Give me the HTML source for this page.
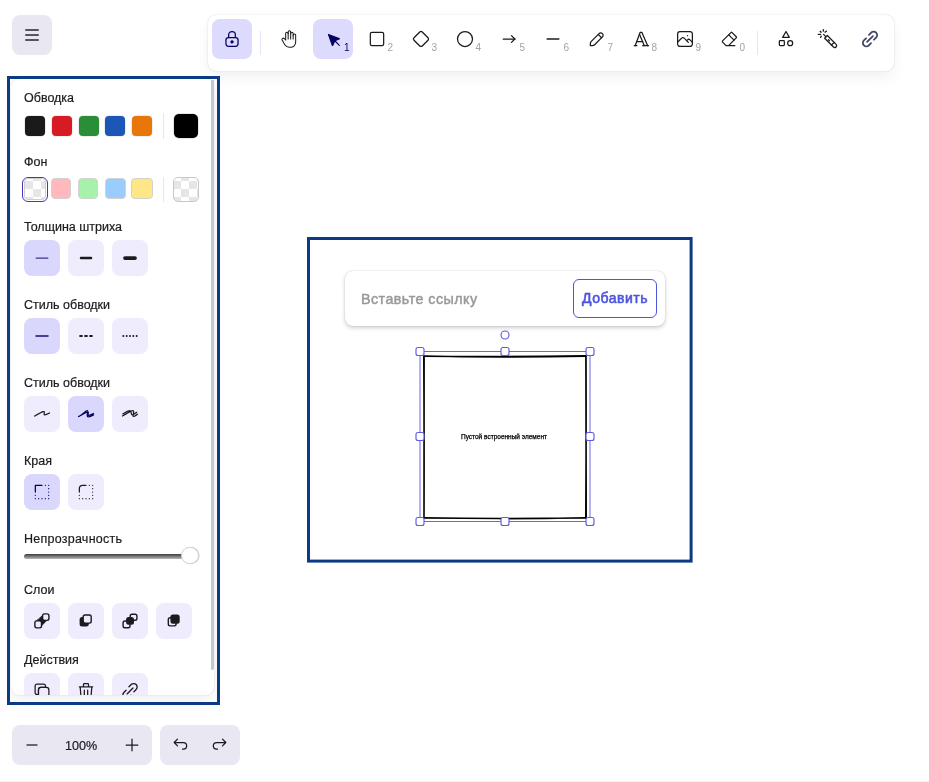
<!DOCTYPE html>
<html><head><meta charset="utf-8">
<style>
*{box-sizing:border-box;margin:0;padding:0}
html,body{width:929px;height:782px;overflow:hidden;background:#fff;font-family:"Liberation Sans",sans-serif;color:#1b1b1f}
.a{position:absolute}
.isl{position:absolute;background:#fff;border-radius:8px;box-shadow:0 0 0.93px 0 rgba(0,0,0,.17),0 0 3.13px 0 rgba(0,0,0,.08),0 7px 14px 0 rgba(0,0,0,.05)}
.tb{position:absolute;width:40px;height:40px;border-radius:8px;top:19px}
.tb svg{position:absolute;left:10px;top:10px;width:20px;height:20px;fill:none;stroke:#1b1b1f;stroke-linecap:round;stroke-linejoin:round}
.sel{background:#dddbfd}
.sel svg{stroke:#030064}
.kb{position:absolute;font-size:10px;color:#a3a3a3;line-height:9px}
.lbl{position:absolute;left:24px;font-size:12.5px;line-height:15px;color:#1b1b1f;white-space:nowrap;-webkit-text-stroke:0.2px #1b1b1f}
.sw{position:absolute;width:20px;height:20px;border-radius:4px}
.pb{position:absolute;width:36px;height:36px;border-radius:8px;background:#eeecfd}
.pb.on{background:#d9d7fb}
.pb svg{position:absolute;left:8px;top:8px;width:20px;height:20px;fill:none;stroke:#1b1b1f;stroke-linecap:round;stroke-linejoin:round}
.pb.on svg{stroke:#030064}
.chk{background:conic-gradient(#e6e6e6 25%,#fff 0 50%,#e6e6e6 0 75%,#fff 0);background-size:16px 16px}
.hd{position:absolute;width:9px;height:9px;border:1px solid #5f5ce0;border-radius:2.5px;background:#fff}
</style></head><body>
<div id="root" style="position:absolute;left:0;top:0;width:929px;height:782px;will-change:transform">

<!-- menu button -->
<div class="a" style="left:12px;top:15px;width:40px;height:40px;border-radius:8px;background:#e9e8f2">
  <div class="a" style="left:13px;top:14px;width:14px;height:2px;background:#55555c;border-radius:1px"></div>
  <div class="a" style="left:13px;top:19px;width:14px;height:2px;background:#55555c;border-radius:1px"></div>
  <div class="a" style="left:13px;top:24px;width:14px;height:2px;background:#55555c;border-radius:1px"></div>
</div>

<!-- toolbar -->
<div class="isl" style="left:208px;top:15px;width:686px;height:56px"></div>
<div class="tb sel" style="left:212px"><svg viewBox="0 0 20 20" stroke-width="1.25"><path d="M13.542 8.542H6.458a2.5 2.5 0 0 0-2.5 2.5v3.75a2.5 2.5 0 0 0 2.5 2.5h7.084a2.5 2.5 0 0 0 2.5-2.5v-3.75a2.5 2.5 0 0 0-2.5-2.5Z"/><path d="M10 13.958a1.042 1.042 0 1 0 0-2.083 1.042 1.042 0 0 0 0 2.083Z" fill="#030064"/><path d="M6.667 8.333V5.417C6.667 3.806 8.159 2.5 10 2.5c1.841 0 3.333 1.306 3.333 2.917v2.916"/></svg></div>
<div class="a" style="left:260px;top:31px;width:1px;height:24px;background:#e6e5f7"></div>
<div class="tb" style="left:269px"><svg viewBox="0 0 24 24" stroke-width="1.25"><path d="M8 13v-7.5a1.5 1.5 0 0 1 3 0v6.5"/><path d="M11 5.5v-2a1.5 1.5 0 1 1 3 0v8.5"/><path d="M14 5.5a1.5 1.5 0 0 1 3 0v6.5"/><path d="M17 7.5a1.5 1.5 0 0 1 3 0v8.5a6 6 0 0 1 -6 6h-2h.208a6 6 0 0 1 -5.012 -2.7a69.74 69.74 0 0 1 -.196 -.3c-.312 -.479 -1.407 -2.388 -3.286 -5.728a1.5 1.5 0 0 1 .536 -2.022a1.867 1.867 0 0 1 2.28 .28l1.47 1.47"/></svg></div>
<div class="tb sel" style="left:313px"><svg viewBox="0 0 22 22" stroke-width="1.25"><path d="M6 6l4.153 11.793a0.365 .365 0 0 0 .331 .207a0.366 .366 0 0 0 .332 -.207l2.184 -4.793l4.787 -1.994a0.355 .355 0 0 0 .213 -.323a0.355 .355 0 0 0 -.213 -.323l-11.787 -4.36z" fill="#030064"/><path d="M13.5 13.5l4.5 4.5"/></svg><span class="kb" style="left:31px;top:23.5px;color:#030064">1</span></div>
<div class="tb" style="left:357px"><svg viewBox="0 0 24 24" stroke-width="1.5"><rect x="4" y="4" width="16" height="16" rx="2"/></svg><span class="kb" style="left:30.5px;top:23.5px">2</span></div>
<div class="tb" style="left:401px"><svg viewBox="0 0 24 24" stroke-width="1.5"><path d="M10.5 20.4l-6.9 -6.9c-.781 -.781 -.781 -2.219 0 -3l6.9 -6.9c.781 -.781 2.219 -.781 3 0l6.9 6.9c.781 .781 .781 2.219 0 3l-6.9 6.9c-.781 .781 -2.219 .781 -3 0z"/></svg><span class="kb" style="left:30.5px;top:23.5px">3</span></div>
<div class="tb" style="left:445px"><svg viewBox="0 0 24 24" stroke-width="1.5"><circle cx="12" cy="12" r="9"/></svg><span class="kb" style="left:30.5px;top:23.5px">4</span></div>
<div class="tb" style="left:489px"><svg viewBox="0 0 24 24" stroke-width="1.5"><line x1="5" y1="12" x2="19" y2="12"/><line x1="15" y1="16" x2="19" y2="12"/><line x1="15" y1="8" x2="19" y2="12"/></svg><span class="kb" style="left:30.5px;top:23.5px">5</span></div>
<div class="tb" style="left:533px"><svg viewBox="0 0 20 20" stroke-width="1.5"><path d="M4.167 10h11.666"/></svg><span class="kb" style="left:30.5px;top:23.5px">6</span></div>
<div class="tb" style="left:577px"><svg viewBox="0 0 20 20" stroke-width="1.25"><path d="m7.643 15.69 7.774-7.773a2.357 2.357 0 1 0-3.334-3.334L4.31 12.357a3.333 3.333 0 0 0-.977 2.357v1.953h1.953c.884 0 1.732-.352 2.357-.977Z"/><path d="m11.25 5.417 3.333 3.333"/></svg><span class="kb" style="left:30.5px;top:23.5px">7</span></div>
<div class="tb" style="left:621px"><svg viewBox="0 0 24 24" stroke-width="1.5"><line x1="4" y1="20" x2="7" y2="20"/><line x1="14" y1="20" x2="21" y2="20"/><line x1="6.9" y1="15" x2="13.8" y2="15"/><line x1="10.2" y1="6.3" x2="16" y2="20"/><polyline points="5 20 11 4 13 4 20 20"/></svg><span class="kb" style="left:30.5px;top:23.5px">8</span></div>
<div class="tb" style="left:665px"><svg viewBox="0 0 20 20" stroke-width="1.25"><path d="M12.5 6.667h.01"/><path d="M4.91 2.625h10.18a2.284 2.284 0 0 1 2.285 2.284v10.182a2.284 2.284 0 0 1-2.284 2.284H4.909a2.284 2.284 0 0 1-2.284-2.284V4.909a2.284 2.284 0 0 1 2.284-2.284Z"/><path d="m3.333 12.5 3.334-3.333c.773-.745 1.726-.745 2.5 0l4.166 4.166"/><path d="m11.667 11.667.833-.834c.774-.744 1.726-.744 2.5 0l2.5 2.5"/></svg><span class="kb" style="left:30.5px;top:23.5px">9</span></div>
<div class="tb" style="left:709px"><svg viewBox="0 0 24 24" stroke-width="1.5"><path d="M19 20h-10.5l-4.21 -4.3a1 1 0 0 1 0 -1.41l10 -10a1 1 0 0 1 1.41 0l5 5a1 1 0 0 1 0 1.41l-9.2 9.3"/><path d="M18 13.3l-6.3 -6.3"/></svg><span class="kb" style="left:30.5px;top:23.5px">0</span></div>
<div class="a" style="left:757px;top:31px;width:1px;height:24px;background:#e6e5f7"></div>
<div class="tb" style="left:766px"><svg viewBox="0 0 24 24" stroke-width="1.5"><path d="M12 3l-4 7h8z"/><path d="M17 17m-3 0a3 3 0 1 0 6 0a3 3 0 1 0 -6 0"/><path d="M4 14m0 1a1 1 0 0 1 1 -1h4a1 1 0 0 1 1 1v4a1 1 0 0 1 -1 1h-4a1 1 0 0 1 -1 -1z"/></svg></div>
<div class="a" style="left:815px;top:27px;width:24px;height:24px"><svg width="24" height="24" viewBox="815 27 24 24" fill="none" stroke="#1b1b1f" stroke-width="1.3" stroke-linecap="round" stroke-linejoin="round"><path d="M827.34 35.56 L836.14 44.36 A1.9 1.9 0 0 1 833.46 47.04 L824.66 38.24 Z"/><path d="M834.14 42.36 L831.46 45.04"/><path d="M828.5 39.7 L829.5 40.7"/><path d="M823.6 34.4 L825.8 36.6"/><path d="M823.3 29.6 V31.2 M825.1 32.1 L826.4 31.2 M820.2 31.3 L821.1 32.2 M818.4 34.4 H820.6 M821.3 36.2 L820.5 37.3"/></svg></div>
<div class="tb" style="left:850px"><svg viewBox="0 0 24 24" stroke-width="2.1" style="stroke:#3f4562"><path d="M8.5 15.5 L15.5 8.5"/><path d="M10.78 6.93 L13.4 4.31 A4.2 4.2 0 0 1 19.34 10.25 L16.72 12.87"/><path d="M13.22 17.07 L10.6 19.69 A4.2 4.2 0 0 1 4.66 13.75 L7.28 11.13"/></svg></div>

<!-- panel -->
<div class="isl" style="left:11px;top:79px;width:203px;height:616px"></div>
<div class="a" style="left:211px;top:80px;width:3px;height:590px;border-radius:0 0 2px 2px;background:#c3c8d1"></div>
<div class="lbl" style="top:91px">Обводка</div>
<div class="sw" style="left:25px;top:116px;background:#1a1a1a;box-shadow:0 0 0 0.5px rgba(0,0,0,.15)"></div>
<div class="sw" style="left:52px;top:116px;background:#d81b23;box-shadow:0 0 0 0.5px rgba(0,0,0,.15)"></div>
<div class="sw" style="left:79px;top:116px;background:#2a8d38;box-shadow:0 0 0 0.5px rgba(0,0,0,.15)"></div>
<div class="sw" style="left:105px;top:116px;background:#1b57b7;box-shadow:0 0 0 0.5px rgba(0,0,0,.15)"></div>
<div class="sw" style="left:132px;top:116px;background:#e8760b;box-shadow:0 0 0 0.5px rgba(0,0,0,.15)"></div>
<div class="a" style="left:163px;top:113px;width:1px;height:26px;background:#e6e5f7"></div>
<div class="a" style="left:174px;top:114px;width:24px;height:24px;border-radius:5px;background:#000;box-shadow:0 0 0 0.5px rgba(0,0,0,.2)"></div>

<div class="lbl" style="top:155px">Фон</div>
<div class="a" style="left:22px;top:177px;width:26px;height:25px;border-radius:6px;border:1px solid #4338b8"></div>
<div class="sw chk" style="left:24px;top:178px;width:22px;height:22px;border:1px solid #cfcfcf;background-position:0px -6px"></div>
<div class="sw" style="left:51px;top:178px;height:21px;background:#ffb9bc;border:1px solid #d2d2d2"></div>
<div class="sw" style="left:78px;top:178px;height:21px;background:#a6f2ab;border:1px solid #d2d2d2"></div>
<div class="sw" style="left:105px;top:178px;width:21px;height:21px;background:#9acdfd;border:1px solid #d2d2d2"></div>
<div class="sw" style="left:131px;top:178px;width:21.5px;height:21px;background:#ffe788;border:1px solid #d2d2d2"></div>
<div class="a" style="left:163px;top:177px;width:1px;height:25px;background:#e6e5f7"></div>
<div class="a chk" style="left:173px;top:177px;width:26px;height:25px;border-radius:5px;border:1px solid #c8c8c8;background-position:-1px -5px"></div>

<div class="lbl" style="top:220px">Толщина штриха</div>
<div class="pb on" style="left:24px;top:240px"><svg viewBox="0 0 20 20" stroke-width="1.25" style="stroke:#3f3290"><path d="M4.167 10h11.666"/></svg></div>
<div class="pb" style="left:68px;top:240px"><svg viewBox="0 0 20 20" stroke-width="2.5"><path d="M5 10h10"/></svg></div>
<div class="pb" style="left:112px;top:240px"><svg viewBox="0 0 20 20" stroke-width="3.75"><path d="M5 10h10"/></svg></div>

<div class="lbl" style="top:298px">Стиль обводки</div>
<div class="pb on" style="left:24px;top:318px"><svg viewBox="0 0 20 20" stroke-width="2" style="stroke:#4a3b9c"><path d="M4.167 10h11.666"/></svg></div>
<div class="pb" style="left:68px;top:318px"><svg viewBox="0 0 24 24" stroke-width="2.5"><path d="M5 12h2"/><path d="M17 12h2"/><path d="M11 12h2"/></svg></div>
<div class="pb" style="left:112px;top:318px"><svg viewBox="0 0 24 24" stroke-width="2.4"><path d="M4 12v.01"/><path d="M8 12v.01"/><path d="M12 12v.01"/><path d="M16 12v.01"/><path d="M20 12v.01"/></svg></div>

<div class="lbl" style="top:376px">Стиль обводки</div>
<div class="pb" style="left:24px;top:396px"><svg viewBox="0 0 20 20" stroke-width="1.25"><path d="M2.5 12.038c1.655-.885 5.9-3.292 8.568-4.354 2.668-1.063.101 2.821 1.32 3.104 1.218.283 5.112-1.814 5.112-1.814"/></svg></div>
<div class="pb on" style="left:68px;top:396px"><svg viewBox="0 0 20 20" stroke-width="1.25"><path d="M2.5 12.563c1.655-.886 5.9-3.293 8.568-4.355 2.668-1.062.101 2.822 1.32 3.105 1.218.283 5.112-1.814 5.112-1.814m-13.469 2.23c2.963-1.586 6.13-5.62 7.468-4.998 1.338.623-1.153 4.11-.132 5.595 1.02 1.487 6.133-1.43 6.133-1.43"/></svg></div>
<div class="pb" style="left:112px;top:396px"><svg viewBox="0 0 20 20" stroke-width="1.25"><path d="M2.5 11.936c1.737-.879 8.627-5.346 10.42-5.268 1.795.078-.418 5.138.345 5.736.763.598 3.53-1.789 4.235-2.147M2.929 9.788c1.164-.519 5.47-3.28 6.987-3.114 1.519.165 1 3.827 2.121 4.109 1.122.281 3.839-2.016 4.606-2.42"/></svg></div>

<div class="lbl" style="top:454px">Края</div>
<div class="pb on" style="left:24px;top:474px"><svg viewBox="0 0 24 24" stroke-width="1.5"><path d="M4 12v-8h8"/><path d="M16 4v.01M20 4v.01M20 8v.01M20 12v.01M20 16v.01M20 20v.01M16 20v.01M12 20v.01M8 20v.01M4 20v.01M4 16v.01"/></svg></div>
<div class="pb" style="left:68px;top:474px"><svg viewBox="0 0 24 24" stroke-width="1.5"><path d="M4 12v-4a4 4 0 0 1 4 -4h4"/><path d="M16 4v.01M20 4v.01M20 8v.01M20 12v.01M20 16v.01M20 20v.01M16 20v.01M12 20v.01M8 20v.01M4 20v.01M4 16v.01"/></svg></div>

<div class="lbl" style="top:532px;letter-spacing:0.25px">Непрозрачность</div>
<div class="a" style="left:24px;top:553.5px;width:162px;height:5px;border-radius:3px;background:linear-gradient(#3c3c3c,#b8b8b8)"></div>
<div class="a" style="left:181.3px;top:547px;width:17.3px;height:17.3px;border-radius:50%;background:#fff;border:1px solid #d4d4d4;box-shadow:0.5px 0 0.5px rgba(0,0,0,.25)"></div>

<div class="lbl" style="top:583px">Слои</div>
<div class="pb" style="left:24px;top:603px"><svg viewBox="0 0 36 36" style="left:0;top:0;width:36px;height:36px" stroke-width="1.4"><path d="M18.7 12.8 V17.3 H22.8 L17.5 22.8 V17.9 H12.8 Z" fill="#1b1b1f" stroke="#1b1b1f" stroke-width="1" stroke-linejoin="round"/><rect x="18.6" y="10.9" width="6.3" height="6.5" rx="1.8" fill="#eeecfd"/><rect x="10.9" y="17.9" width="6.6" height="7" rx="1.8" fill="#eeecfd"/></svg></div>
<div class="pb" style="left:68px;top:603px"><svg viewBox="0 0 36 36" style="left:0;top:0;width:36px;height:36px" stroke-width="1.4"><rect x="12.3" y="14.8" width="7.8" height="8.1" rx="1.8" fill="#1b1b1f"/><rect x="15.2" y="12" width="8" height="8.1" rx="1.8" fill="#eeecfd"/></svg></div>
<div class="pb" style="left:112px;top:603px"><svg viewBox="0 0 36 36" style="left:0;top:0;width:36px;height:36px" stroke-width="1.4"><rect x="18.2" y="11.2" width="6.7" height="6.1" rx="1.8" fill="#eeecfd"/><rect x="11.1" y="18" width="6.9" height="6.8" rx="1.8" fill="#eeecfd"/><rect x="14.8" y="14.7" width="6.5" height="6.4" rx="1.8" fill="#1b1b1f"/></svg></div>
<div class="pb" style="left:156px;top:603px"><svg viewBox="0 0 36 36" style="left:0;top:0;width:36px;height:36px" stroke-width="1.4"><rect x="12.3" y="14.8" width="7.8" height="8.1" rx="1.8" fill="#eeecfd"/><rect x="15.1" y="12.3" width="7.9" height="7.8" rx="1.8" fill="#1b1b1f"/></svg></div>

<div class="lbl" style="top:653px">Действия</div>
<div class="a" style="left:11px;top:660px;width:203px;height:35px;overflow:hidden;border-radius:0 0 8px 8px">
  <div class="pb" style="left:13px;top:13px"><svg viewBox="0 0 20 20" stroke-width="1.25"><path d="M14.375 6.458H8.958a2.5 2.5 0 0 0-2.5 2.5v5.417a2.5 2.5 0 0 0 2.5 2.5h5.417a2.5 2.5 0 0 0 2.5-2.5V8.958a2.5 2.5 0 0 0-2.5-2.5Z"/><path d="M11.667 3.125c.517 0 .986.21 1.325.55.34.338.55.807.55 1.325v1.458H8.333c-.485 0-.927.185-1.26.487-.343.312-.57.75-.609 1.24l-.005 5.357H5a1.87 1.87 0 0 1-1.326-.55 1.87 1.87 0 0 1-.549-1.325V5c0-.518.21-.987.55-1.326.338-.34.807-.549 1.325-.549h6.667Z"/></svg></div>
  <div class="pb" style="left:57px;top:13px"><svg viewBox="0 0 20 20" stroke-width="1.25"><path d="M3.333 5.833h13.334M8.333 9.167v5M11.667 9.167v5M4.167 5.833l.833 10c0 .92.746 1.667 1.667 1.667h6.666c.92 0 1.667-.746 1.667-1.667l.833-10M7.5 5.833v-2.5a.833.833 0 0 1 .833-.833h3.334a.833.833 0 0 1 .833.833v2.5"/></svg></div>
  <div class="pb" style="left:101px;top:13px"><svg viewBox="0 0 24 24" stroke-width="1.6"><path d="M8.5 15.5 L15.5 8.5"/><path d="M10.78 6.93 L13.4 4.31 A4.2 4.2 0 0 1 19.34 10.25 L16.72 12.87"/><path d="M13.22 17.07 L10.6 19.69 A4.2 4.2 0 0 1 4.66 13.75 L7.28 11.13"/></svg></div>
</div>
<!-- blue outline -->
<div class="a" style="left:7px;top:76px;width:213px;height:629px;border:3px solid #0c3b85"></div>


<!-- canvas -->
<svg class="a" style="left:0;top:0;width:929px;height:782px" viewBox="0 0 929 782"><rect x="308.5" y="238.5" width="382.6" height="322.6" fill="none" stroke="#0c3b85" stroke-width="3"/></svg>
<!-- embed rect -->
<svg class="a" style="left:400px;top:330px;width:210px;height:210px;overflow:visible" viewBox="400 330 210 210" fill="none">
  <g stroke="#000" stroke-width="1.6" stroke-linecap="round" fill="none"><path d="M424 356.3 Q505 357.1 586 355.9 M424 356.0 Q505 357.7 586 356.3"/><path d="M586 356 Q586.3 437 585.8 518 M585.9 356.2 Q585.7 437 586.2 518.1"/><path d="M586 517.7 Q505 519.4 424 517.8 M586 518 Q505 518.9 424 518"/><path d="M424 518 Q423.7 437 424.1 356.2 M424 518 Q424.3 437 423.8 356"/></g>
  <rect x="420" y="351.5" width="170" height="170" stroke="#6a66e0" stroke-width="1"/>
  <g fill="#fff" stroke="#5f5ce0" stroke-width="1.15">
    <rect x="416" y="347.5" width="8" height="8" rx="2"/>
    <rect x="501" y="347.5" width="8" height="8" rx="2"/>
    <rect x="586" y="347.5" width="8" height="8" rx="2"/>
    <rect x="416" y="432.5" width="8" height="8" rx="2"/>
    <rect x="586" y="432.5" width="8" height="8" rx="2"/>
    <rect x="416" y="517.5" width="8" height="8" rx="2"/>
    <rect x="501" y="517.5" width="8" height="8" rx="2"/>
    <rect x="586" y="517.5" width="8" height="8" rx="2"/>
    <circle cx="505" cy="335" r="4"/>
  </g>
</svg>
<div class="a" style="left:423px;top:433px;width:162px;text-align:center;font-size:6.5px;line-height:8px;color:#000;white-space:nowrap;-webkit-text-stroke:0.25px #000">Пустой встроенный элемент</div>
<!-- link popup -->
<div class="isl" style="left:345px;top:271px;width:320px;height:55px;box-shadow:0 0 0.93px 0 rgba(0,0,0,.17),0 0 3.13px 0 rgba(0,0,0,.08),0 2px 4px 0 rgba(0,0,0,.18)">
  <div class="a" style="left:16px;top:20px;font-size:14.3px;line-height:16px;color:#989898;letter-spacing:0.45px;-webkit-text-stroke:0.45px #989898;white-space:nowrap">Вставьте ссылку</div>
  <div class="a" style="left:228px;top:8px;width:84px;height:39px;border:1px solid #4c55dc;border-radius:6px">
    <div class="a" style="left:0;top:10px;width:82px;text-align:center;font-size:14px;line-height:16px;color:#4c55dc;letter-spacing:0.5px;-webkit-text-stroke:0.6px #4c55dc">Добавить</div>
  </div>
</div>


<!-- bottom -->
<div class="a" style="left:12px;top:725px;width:140px;height:40px;border-radius:8px;background:#e9e8f2">
  <svg class="a" style="left:10px;top:10px;width:20px;height:20px" viewBox="0 0 20 20" fill="none" stroke="#3c3c42" stroke-width="1.4" stroke-linecap="round"><path d="M5 10h10"/></svg>
  <div class="a" style="left:49px;top:13.5px;width:40px;font-size:12.6px;line-height:14px;text-align:center;color:#1b1b1f;-webkit-text-stroke:0.2px #1b1b1f">100%</div>
  <svg class="a" style="left:110px;top:10px;width:20px;height:20px" viewBox="0 0 20 20" fill="none" stroke="#1b1b1f" stroke-width="1.25" stroke-linecap="round"><path d="M10 4.167v11.666M4.167 10h11.666"/></svg>
</div>
<div class="a" style="left:160px;top:725px;width:80px;height:40px;border-radius:8px;background:#e9e8f2">
  <svg class="a" style="left:10px;top:10px;width:20px;height:20px" viewBox="0 0 20 20" fill="none" stroke="#1b1b1f" stroke-width="1.25" stroke-linecap="round" stroke-linejoin="round"><path d="M7.5 10.833 4.167 7.5 7.5 4.167M4.167 7.5h9.166a3.333 3.333 0 0 1 0 6.667H12.5"/></svg>
  <svg class="a" style="left:50px;top:10px;width:20px;height:20px" viewBox="0 0 20 20" fill="none" stroke="#1b1b1f" stroke-width="1.25" stroke-linecap="round" stroke-linejoin="round"><path d="M12.5 10.833 15.833 7.5 12.5 4.167M15.833 7.5H6.667a3.333 3.333 0 1 0 0 6.667h.833"/></svg>
</div>
<div class="a" style="left:0;top:781px;width:929px;height:1px;background:#f3f3f7"></div>
</div>
</body></html>
